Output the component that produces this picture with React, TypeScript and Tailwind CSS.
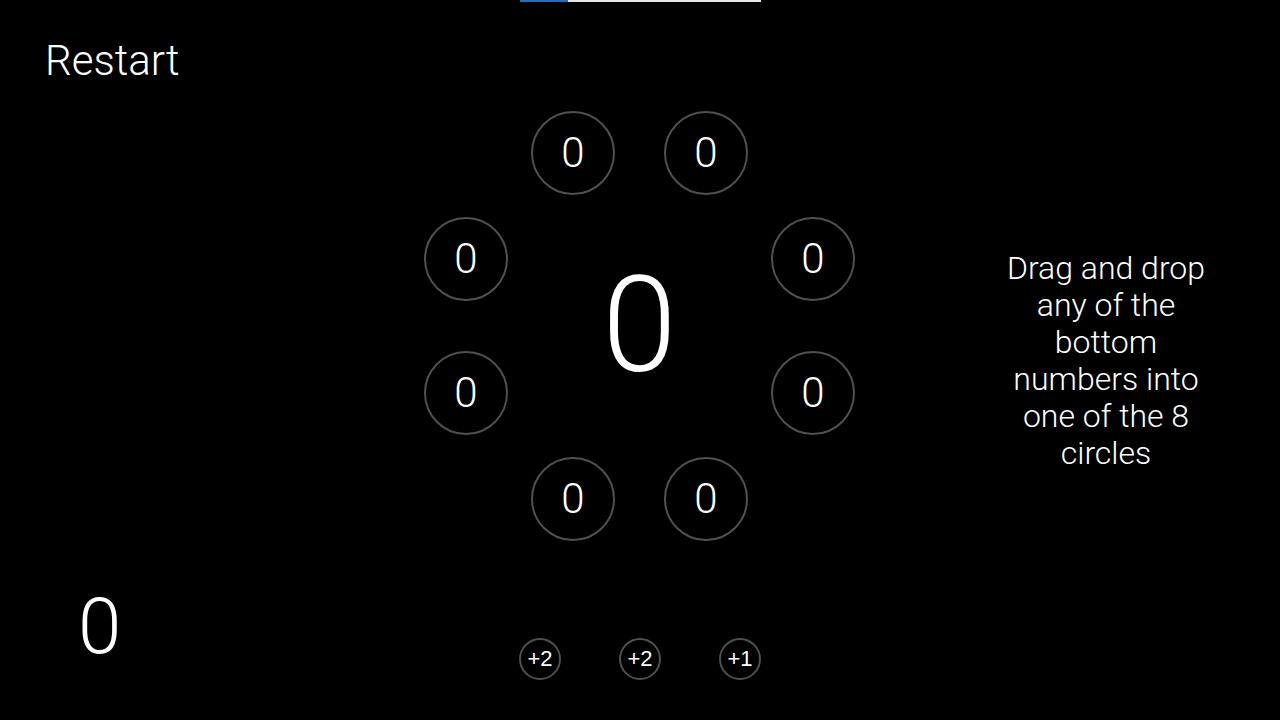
const ring = [
  { col: "col-start-3", row: "row-start-1" },
  { col: "col-start-5", row: "row-start-1" },
  { col: "col-start-1", row: "row-start-3" },
  { col: "col-start-7", row: "row-start-3" },
  { col: "col-start-1", row: "row-start-5" },
  { col: "col-start-7", row: "row-start-5" },
  { col: "col-start-3", row: "row-start-7" },
  { col: "col-start-5", row: "row-start-7" },
];

const picks = ["+2", "+2", "+1"];

export default function App() {
  return (
    <div className="h-[720px] w-[1280px] overflow-hidden bg-black text-white font-['Roboto',sans-serif] font-light">
      {/* progress */}
      <div className="mx-auto flex h-[2px] w-[241px] bg-[#e6e6e6]">
        <div className="h-full w-[48px] bg-[#2b6cb8]" />
      </div>

      <div className="flex h-[718px]">
        {/* left */}
        <div className="flex w-[424px] flex-col justify-between">
          <button className="self-start pl-[45px] pt-[38px] text-[42px] leading-none font-light">Restart</button>
          <div className="pb-[54px] pl-[78px] text-[78px] leading-none">0</div>
        </div>

        {/* board */}
        <div className="flex w-[431px] flex-col">
          <div className="mt-[109px] grid grid-cols-[84px_23px_84px_49px_84px_23px_84px] grid-rows-[84px_22px_84px_50px_84px_22px_84px]">
            {ring.map((c, i) => (
              <div
                key={i}
                className={`${c.col} ${c.row} flex h-[84px] w-[84px] items-center justify-center rounded-full border-2 border-[#505050] text-[42px] leading-none`}
              >
                0
              </div>
            ))}
            <div className="col-start-3 col-span-3 row-start-3 row-span-3 flex items-center justify-center text-[134px] leading-none">
              0
            </div>
          </div>

          <div className="mt-[97px] flex justify-center gap-[58px] pl-[1px]">
            {picks.map((p, i) => (
              <div
                key={i}
                className="flex h-[42px] w-[42px] items-center justify-center rounded-full border-2 border-[#505050] font-['Liberation_Sans',sans-serif] text-[22px] font-normal leading-none"
              >
                {p}
              </div>
            ))}
          </div>
        </div>

        {/* hint */}
        <div className="flex-1 pl-[137px] pt-[248px]">
          <p className="w-[228px] text-center text-[32px] leading-[37px]">
            Drag and drop any of the bottom numbers into one of the 8 circles
          </p>
        </div>
      </div>
    </div>
  );
}
